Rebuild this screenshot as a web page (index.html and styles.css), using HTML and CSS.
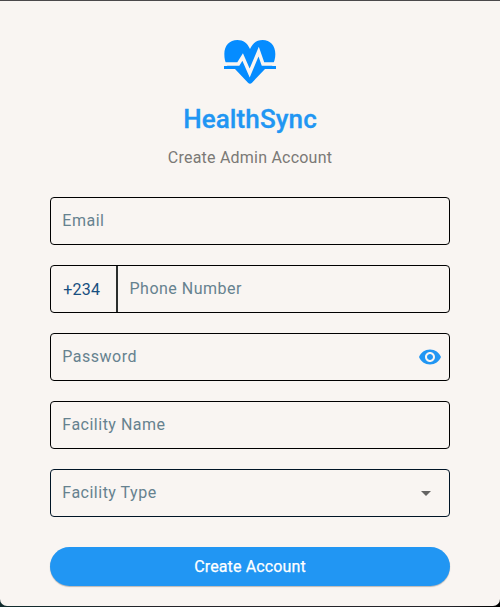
FILE: index.html
```html
<!DOCTYPE html>
<html lang="en">
<head>
<meta charset="utf-8">
<title>HealthSync</title>
<link rel="stylesheet" href="styles.css">
</head>
<body>
<main class="window">
  <svg class="logo" viewBox="0 0 156 132" aria-hidden="true">
    <path class="blue" d="M0 78V87H33L72 128Q78 134 84 128L123 87H156V78H144C151 67 154 55 154 42C154 16 138 0 116 0C98 0 86 9 78 27C70 9 58 0 40 0C17 0 1 16 1 42C1 55 3 67 10 78Z"/>
    <path class="pulse" d="M0 72H43L56 51L77 99L104 35L117 72H156"/>
  </svg>
  <h1 class="brand">HealthSync</h1>
  <p class="subtitle">Create Admin Account</p>
  <form class="form">
    <div class="field"><span class="label">Email</span></div>
    <div class="field phone"><span class="code">+234</span><span class="label">Phone Number</span></div>
    <div class="field"><span class="label">Password</span>
      <svg class="eye" viewBox="0 0 24 24" aria-hidden="true"><path d="M12 4.5C7 4.5 2.73 7.61 1 12c1.73 4.39 6 7.5 11 7.5s9.27-3.11 11-7.5c-1.73-4.39-6-7.5-11-7.5zM12 17c-2.76 0-5-2.24-5-5s2.24-5 5-5 5 2.24 5 5-2.24 5-5 5zm0-8c-1.66 0-3 1.34-3 3s1.34 3 3 3 3-1.34 3-3-1.34-3-3-3z"/></svg>
    </div>
    <div class="field"><span class="label">Facility Name</span></div>
    <div class="field select"><span class="label">Facility Type</span>
      <svg class="arrow" viewBox="0 0 24 24" aria-hidden="true"><path d="M7 10l5 5 5-5z"/></svg>
    </div>
    <button class="submit" type="button">Create Account</button>
  </form>
</main>
</body>
</html>
```
FILE: styles.css
```css
* { box-sizing: border-box; }
body {
  margin: 0;
  height: 607px;
  overflow: hidden;
  background: linear-gradient(90deg, #102c2e, #24242a 30%, #24242a 90%, #000);
  font-family: Roboto, sans-serif;
}
.window {
  height: 606px;
  padding: 39px 50px 0;
  display: flex;
  flex-direction: column;
  align-items: center;
  background: #f9f5f2;
  border-top: 1px solid #4b494b;
  border-radius: 0 0 7px 7px;
}
.logo { width: 52px; height: 44px; flex: none; overflow: visible; }
.blue { fill: #058cff; }
.pulse { fill: none; stroke: #f9f5f2; stroke-width: 10.5; }
.brand {
  margin: 19px 0 0;
  font-size: 26px;
  line-height: 32px;
  font-weight: 500;
  letter-spacing: 0.1px;
  -webkit-text-stroke: 0.3px #2196f3;
  color: #2196f3;
}
.subtitle {
  margin: 13px 0 0;
  font-size: 16px;
  line-height: 20px;
  letter-spacing: 0.22px;
  color: #7b7976;
}
.form {
  width: 100%;
  margin-top: 29px;
  display: flex;
  flex-direction: column;
  gap: 20px;
}
.field {
  height: 48px;
  padding: 0 7px 2px 11.3px;
  display: flex;
  align-items: center;
  border: 1px solid #000;
  border-radius: 4px;
  font-size: 16px;
  letter-spacing: 0.5px;
  color: #66828f;
}
.phone { padding: 0; }
.phone .label { padding: 0 0 2px 11.5px; }
.code {
  width: 67px;
  height: 46px;
  padding-left: 12.3px;
  line-height: 47px;
  border-right: 2px solid #2b2e2d;
  color: #174f80;
  letter-spacing: 0.2px;
}
.eye { width: 24px; height: 24px; margin: 2px 0 0 auto; fill: #2196f3; }
.select { border-color: #001426; }
.arrow { width: 24px; height: 24px; margin: 2px 4px 0 auto; fill: #656463; }
.submit {
  height: 39px;
  margin-top: 10px;
  padding: 0;
  border: 0;
  border-radius: 20px;
  background: #2196f3;
  color: #fff;
  font: 400 16px/39px Roboto, sans-serif;
  letter-spacing: 0.13px;
  -webkit-text-stroke: 0.25px #fff;
  box-shadow: 0 1px 1px rgb(0 0 0 / 25%);
}
```
